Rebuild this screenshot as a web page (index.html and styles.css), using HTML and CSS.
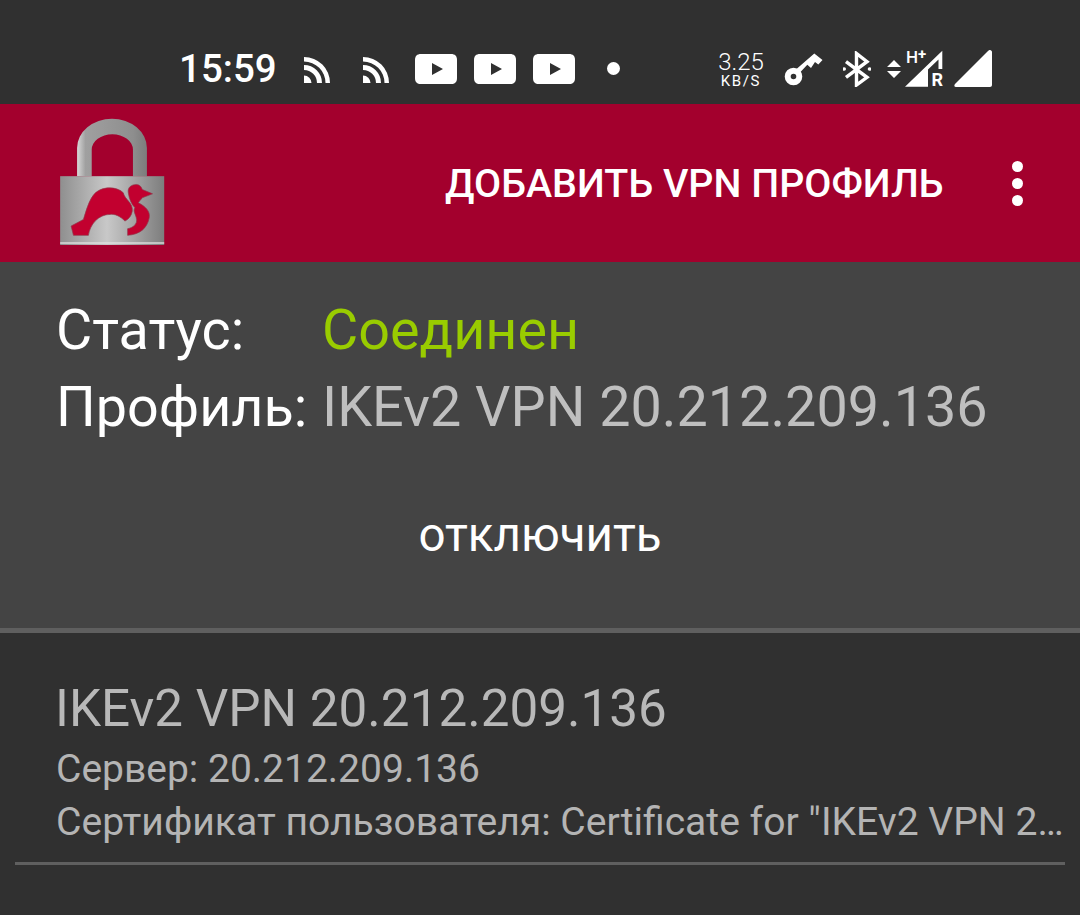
FILE: index.html
```html
<!DOCTYPE html>
<html lang="ru">
<head>
<meta charset="utf-8">
<title>VPN</title>
<link rel="stylesheet" href="styles.css">
</head>
<body>
<div class="statusbar">
  <span class="time">15:59</span>
  <svg class="ic rss" viewBox="0 0 26 26"><path d="M0 26V18.5A7.500 7.500 0 0 1 7.500 26Z"/><path d="M0 8V13A13 13 0 0 1 13 26H18A18 18 0 0 0 0 8Z"/><path d="M0 0V4.500A21.500 21.500 0 0 1 21.500 26H26A26 26 0 0 0 0 0Z"/></svg>
  <svg class="ic rss rss2" viewBox="0 0 26 26"><path d="M0 26V18.5A7.500 7.500 0 0 1 7.500 26Z"/><path d="M0 8V13A13 13 0 0 1 13 26H18A18 18 0 0 0 0 8Z"/><path d="M0 0V4.500A21.500 21.500 0 0 1 21.500 26H26A26 26 0 0 0 0 0Z"/></svg>
  <svg class="ic yt yt1" viewBox="0 0 42 30"><path fill-rule="evenodd" d="M6 0H36C40 0 42 2 42 6V24C42 28 40 30 36 30H6C2 30 0 28 0 24V6C0 2 2 0 6 0ZM17 9V21L28 15Z"/></svg>
  <svg class="ic yt" viewBox="0 0 42 30"><path fill-rule="evenodd" d="M6 0H36C40 0 42 2 42 6V24C42 28 40 30 36 30H6C2 30 0 28 0 24V6C0 2 2 0 6 0ZM17 9V21L28 15Z"/></svg>
  <svg class="ic yt" viewBox="0 0 42 30"><path fill-rule="evenodd" d="M6 0H36C40 0 42 2 42 6V24C42 28 40 30 36 30H6C2 30 0 28 0 24V6C0 2 2 0 6 0ZM17 9V21L28 15Z"/></svg>
  <span class="dot"></span>
  <div class="speed"><span class="speed-num">3.25</span><span class="speed-unit">KB/S</span></div>
  <svg class="ic key" viewBox="0 0 39 34"><circle cx="9.500" cy="24.500" r="5.800" fill="none" stroke="#fff" stroke-width="6"/><path d="M12.500 17L30.300 1.500L38.500 8L34.300 12.500L31 10L27 16L23.300 12.800L16 20.500Z"/></svg>
  <svg class="ic bt" viewBox="0 0 28 36"><path d="M3 10.700L24 26.300L13.500 34V2.500L24 10.700L3 26.300" fill="none" stroke="#fff" stroke-width="3.400"/><circle cx="1.200" cy="18" r="1.800"/><circle cx="26.500" cy="18" r="1.800"/></svg>
  <svg class="ic arrows" viewBox="0 0 14 18"><path d="M7 0L14 7H0ZM7 18L0 11H14Z"/></svg>
  <div class="net">
    <svg class="netsig" viewBox="0 0 38 37"><path d="M0 36.700L37.300 .7V19H33.500V9.500L23 19.500V36.700Z"/></svg>
    <span class="net-h">H<span class="net-plus">+</span></span>
    <span class="net-r">R</span>
  </div>
  <svg class="ic sig" viewBox="0 0 38 37"><path d="M36 0C37 0 38 1 38 2V35C38 36 37 37 36 37H2C0 37 0 35 1 34L34 1C35 0 35 0 36 0Z"/></svg>
</div>
<header class="toolbar">
  <svg class="logo" viewBox="60 40 315 385">
    <defs>
      <linearGradient id="steel" x1="0" y1="0" x2="1" y2="0">
        <stop offset="0" stop-color="#8f8f8f"/><stop offset=".45" stop-color="#c8c8c8"/><stop offset="1" stop-color="#7d7d7d"/>
      </linearGradient>
      <linearGradient id="shackle" x1="0" y1="0" x2="1" y2="0">
        <stop offset="0" stop-color="#d8d8d8"/><stop offset=".12" stop-color="#a0a0a0"/><stop offset=".8" stop-color="#8e8e8e"/><stop offset="1" stop-color="#7c7c7c"/>
      </linearGradient>
    </defs>
    <path d="M111 215V130A105 88 0 0 1 321 130V215H279V135A62 46 0 0 0 155 135V215Z" fill="url(#shackle)"/>
    <rect x="60" y="215" width="313" height="207" fill="url(#steel)"/>
    <rect x="60" y="414" width="313" height="4" fill="#e2e2e2"/>
    <path d="M93 365L130 345C140 315 150 268 180 256C205 245 235 250 250 265C254 285 280 295 277 320C275 335 265 345 255 350C240 335 225 328 210 330C175 330 150 360 145 393H100Z" fill="#c2002f" stroke="#8e3a4c" stroke-width="2"/>
    <path d="M265 265C262 248 275 240 290 240C300 241 305 248 307 255L338 268L307 280C303 286 298 290 295 295C315 305 332 320 328 340C322 372 300 390 263 393V373C280 370 292 358 290 345C288 330 278 320 285 310C275 300 268 285 265 265Z" fill="#c2002f" stroke="#8e3a4c" stroke-width="2"/>
  </svg>
  <span class="add">ДОБАВИТЬ VPN ПРОФИЛЬ</span>
  <div class="more"><i></i><i></i><i></i></div>
</header>
<section class="panel">
  <div class="info">
    <span class="lbl">Статус:</span><span class="ok">Соединен</span>
    <span class="lbl">Профиль:</span><span class="val">IKEv2 VPN 20.212.209.136</span>
  </div>
  <div class="btn">отключить</div>
</section>
<section class="list">
  <div class="item">
    <div class="item-title">IKEv2 VPN 20.212.209.136</div>
    <div class="item-sub">Сервер: 20.212.209.136</div>
    <div class="item-sub item-cert">Сертификат пользователя: Certificate for "IKEv2 VPN 2…</div>
  </div>
</section>
</body>
</html>
```
FILE: styles.css
```css
* { box-sizing: border-box; }
html, body { margin: 0; padding: 0; }
body {
  width: 1080px; height: 915px; overflow: hidden;
  background: #303030; color: #fff;
  font-family: Roboto, "Liberation Sans", sans-serif;
}
.statusbar {
  height: 104px; background: #303030;
  display: flex; align-items: flex-start;
  padding-left: 179px;
}
.ic { fill: #fff; display: block; flex: none; }
.time { font-size: 38.5px; font-weight: 500; line-height: 46px; margin-top: 46px; width: 96px; flex: none; white-space: nowrap; }
.rss { width: 26px; height: 26px; margin-top: 57px; margin-left: 29px; }
.rss2 { margin-left: 33px; }
.yt { width: 42px; height: 30px; margin-top: 54px; margin-left: 17px; }
.yt1 { margin-left: 26px; }
.dot { width: 13px; height: 13px; border-radius: 50%; background: #fff; margin-top: 62px; margin-left: 32px; flex: none; }
.speed { width: 46px; margin-left: 98px; margin-top: 50px; display: flex; flex-direction: column; align-items: center; flex: none; }
.speed-num { font-size: 24px; line-height: 24px; font-weight: 300; }
.speed-unit { font-size: 15px; line-height: 15px; letter-spacing: 1.6px; }
.key { width: 39px; height: 34px; margin-top: 52px; margin-left: 20px; }
.bt { width: 28px; height: 36px; margin-top: 51px; margin-left: 20px; }
.arrows { width: 14px; height: 18px; margin-top: 60px; margin-left: 16px; }
.net { position: relative; width: 38px; height: 37px; margin-top: 50px; margin-left: 4px; flex: none; }
.netsig { display: block; width: 38px; height: 37px; fill: #fff; }
.net-h { position: absolute; left: 1px; top: -3px; font-size: 17px; line-height: 20px; font-weight: 500; white-space: nowrap; }
.net-plus { position: absolute; left: 12px; top: -3px; font-size: 15px; font-weight: 700; }
.net-r { position: absolute; right: 0; bottom: -3px; font-size: 18px; line-height: 20px; font-weight: 700; }
.sig { width: 38px; height: 37px; margin-top: 50px; margin-left: 11px; }
.toolbar {
  height: 158px; background: #a3002d;
  display: flex; align-items: center;
  padding-left: 60px;
}
.logo { width: 105px; height: 128px; flex: none; margin-top: -3px; }
.add { font-size: 39.4px; font-weight: 500; margin-left: 280px; white-space: nowrap; flex: none; }
.more { display: flex; flex-direction: column; gap: 6px; margin-left: 69px; }
.more i { display: block; width: 11px; height: 11px; border-radius: 50%; background: #fff; }
.panel { height: 366px; background: #444; padding: 30px 56px 0; }
.info {
  display: grid; grid-template-columns: 266px auto; row-gap: 1px;
  font-size: 55.7px; line-height: 76px;
}
.ok { color: #99cc00; }
.val { color: #bfbfbf; }
.btn { font-size: 47.5px; text-align: center; margin-top: 60px; line-height: 60px; margin-left: -56px; margin-right: -56px; }
.list { border-top: 5px solid #5f5f5f; }
.item { margin: 0 15px; padding: 46px 0 0 41px; height: 232px; border-bottom: 3px solid #5f5f5f; }
.item-title { font-size: 51.2px; line-height: 60px; color: #b8b8b8; margin-left: -1px; }
.item-sub { font-size: 39px; line-height: 53px; color: #b4b4b4; white-space: nowrap; }
.item-sub:nth-child(2) { margin-top: 4px; }
.item-cert { font-size: 39.1px; }
```
